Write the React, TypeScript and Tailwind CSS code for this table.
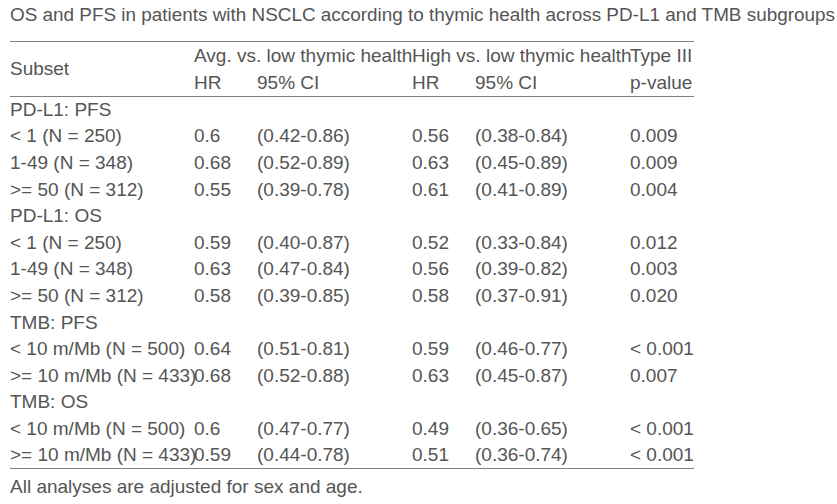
import React from "react";

type Row = { label: string; group?: boolean; v?: [string, string, string, string, string] };

const rows: Row[] = [
  { label: "PD-L1: PFS", group: true },
  { label: "< 1 (N = 250)", v: ["0.6", "(0.42-0.86)", "0.56", "(0.38-0.84)", "0.009"] },
  { label: "1-49 (N = 348)", v: ["0.68", "(0.52-0.89)", "0.63", "(0.45-0.89)", "0.009"] },
  { label: ">= 50 (N = 312)", v: ["0.55", "(0.39-0.78)", "0.61", "(0.41-0.89)", "0.004"] },
  { label: "PD-L1: OS", group: true },
  { label: "< 1 (N = 250)", v: ["0.59", "(0.40-0.87)", "0.52", "(0.33-0.84)", "0.012"] },
  { label: "1-49 (N = 348)", v: ["0.63", "(0.47-0.84)", "0.56", "(0.39-0.82)", "0.003"] },
  { label: ">= 50 (N = 312)", v: ["0.58", "(0.39-0.85)", "0.58", "(0.37-0.91)", "0.020"] },
  { label: "TMB: PFS", group: true },
  { label: "< 10 m/Mb (N = 500)", v: ["0.64", "(0.51-0.81)", "0.59", "(0.46-0.77)", "< 0.001"] },
  { label: ">= 10 m/Mb (N = 433)", v: ["0.68", "(0.52-0.88)", "0.63", "(0.45-0.87)", "0.007"] },
  { label: "TMB: OS", group: true },
  { label: "< 10 m/Mb (N = 500)", v: ["0.6", "(0.47-0.77)", "0.49", "(0.36-0.65)", "< 0.001"] },
  { label: ">= 10 m/Mb (N = 433)", v: ["0.59", "(0.44-0.78)", "0.51", "(0.36-0.74)", "< 0.001"] },
];

export default function App() {
  return (
    <div
      className="w-[837px] h-[504px] overflow-hidden bg-white pl-[10px] text-[#555555]"
      style={{ fontFamily: '"Liberation Sans", Arial, sans-serif' }}
    >
      <div className="mt-[2px] h-[26px] leading-[26px] text-[18.9px] whitespace-nowrap">
        OS and PFS in patients with NSCLC according to thymic health across PD-L1 and TMB subgroups
      </div>
      <table className="mt-[13px] w-[684px] table-fixed border-collapse text-[19px] leading-[22px]">
        <colgroup>
          <col className="w-[184px]" />
          <col className="w-[63px]" />
          <col className="w-[155px]" />
          <col className="w-[63px]" />
          <col className="w-[155px]" />
          <col className="w-[64px]" />
        </colgroup>
        <thead>
          <tr className="h-[27.5px] border-t border-[#808080]">
            <th rowSpan={2} className="p-0 text-left font-normal align-middle whitespace-nowrap">
              Subset
            </th>
            <th colSpan={2} className="p-0 text-left font-normal whitespace-nowrap">
              Avg. vs. low thymic health
            </th>
            <th colSpan={2} className="p-0 text-left font-normal whitespace-nowrap">
              High vs. low thymic health
            </th>
            <th className="p-0 text-left font-normal whitespace-nowrap">Type III</th>
          </tr>
          <tr className="h-[27.5px] border-b border-[#808080]">
            <th className="p-0 text-left font-normal">HR</th>
            <th className="p-0 text-left font-normal">95% CI</th>
            <th className="p-0 text-left font-normal">HR</th>
            <th className="p-0 text-left font-normal">95% CI</th>
            <th className="p-0 text-left font-normal">p-value</th>
          </tr>
        </thead>
        <tbody className="border-b border-[#808080]">
          {rows.map((r, i) => (
            <tr key={i} className="h-[26.6px]">
              <td className="p-0 whitespace-nowrap">{r.label}</td>
              {r.v ? (
                r.v.map((c, j) => (
                  <td key={j} className="p-0 whitespace-nowrap">
                    {c}
                  </td>
                ))
              ) : (
                <td colSpan={5} className="p-0" />
              )}
            </tr>
          ))}
        </tbody>
        <tfoot>
          <tr className="h-[34px]">
            <td colSpan={6} className="p-0 pt-[2px] whitespace-nowrap">
              All analyses are adjusted for sex and age.
            </td>
          </tr>
        </tfoot>
      </table>
    </div>
  );
}
